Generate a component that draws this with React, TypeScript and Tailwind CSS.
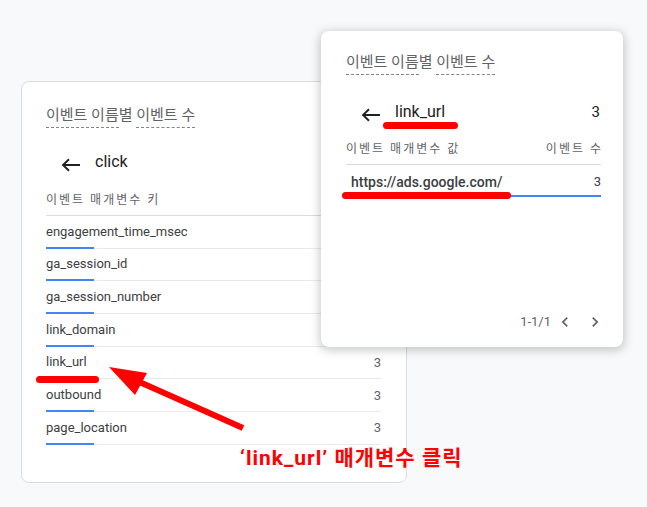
import React from 'react';

const rows = [
  'engagement_time_msec',
  'ga_session_id',
  'ga_session_number',
  'link_domain',
  'link_url',
  'outbound',
  'page_location',
];

const font = "font-['Roboto','Noto_Sans_CJK_KR',sans-serif]";

const Title: React.FC = () => (
  <div className="flex text-[15px] leading-[18px] text-[#5f6368] whitespace-pre">
    <span className="border-b border-dashed border-[#80868b] pb-[3px]">이벤트 이름</span>
    <span>별 </span>
    <span className="border-b border-dashed border-[#80868b] pb-[3px]">이벤트 수</span>
  </div>
);

const BackArrow: React.FC = () => (
  <svg width="20" height="14" viewBox="0 0 20 14" className="text-[#202124]">
    <path d="M19 7H2.5M8 1.2L2 7l6 5.8" fill="none" stroke="currentColor" strokeWidth="1.9" />
  </svg>
);

export default function App() {
  return (
    <div className={`relative w-[647px] h-[507px] bg-[#f8f9fa] overflow-hidden ${font}`}>
      {/* left card */}
      <div className="absolute left-[21px] top-[81px] w-[386px] h-[402px] bg-white border border-[#dadce0] rounded-[8px] pl-[24px] pr-[25px] pt-[24px]">
        <Title />
        <div className="flex items-center h-[24px] mt-[22px] pl-[15px]">
          <span className="mt-[6px]"><BackArrow /></span>
          <span className="ml-[14px] text-[16px] text-[#202124]">click</span>
        </div>
        <div className="mt-[17px] text-[12px] tracking-[2px] text-[#5f6368] h-[25px] border-b border-[#dadce0]">
          이벤트 매개변수 키
        </div>
        <div>
          {rows.map((r, i) => (
            <div key={r} className="relative h-[32.7px] border-b border-[#e8eaed] flex items-center justify-between text-[13px] text-[#3c4043]">
              <span className="-mt-[1px]">{r}</span>
              {i >= 4 && <span className="text-[#5f6368]">3</span>}
              {i !== 4 && <div className="absolute left-0 -bottom-[1px] w-[48px] h-[2px] bg-[#4285f4]" />}
            </div>
          ))}
        </div>
      </div>

      {/* popup card */}
      <div className="absolute left-[321px] top-[31px] w-[302px] h-[316px] bg-white rounded-[8px] shadow-[0_2px_8px_2px_rgba(60,64,67,0.25)] pl-[25px] pr-[22px] pt-[22px]">
        <Title />
        <div className="flex items-center h-[24px] mt-[25px] pl-[15px]">
          <span className="mt-[6px]"><BackArrow /></span>
          <span className="ml-[14px] text-[16px] text-[#202124] flex-1">link_url</span>
          <span className="text-[15px] text-[#202124] mr-[1px]">3</span>
        </div>
        <div className="mt-[16px] flex justify-between text-[12px] tracking-[2px] text-[#5f6368] h-[25px] border-b border-[#dadce0]">
          <span>이벤트 매개변수 값</span>
          <span className="-mr-[2px]">이벤트 수</span>
        </div>
        <div className="relative h-[32px] flex items-center justify-between text-[14px] font-medium text-[#3c4043] pl-[5px]">
          <span className="mt-[2px]">https://ads.google.com/</span>
          <span className="mt-[2px] text-[13px] font-normal">3</span>
          <div className="absolute left-0 right-0 bottom-[0px] h-[2px] bg-[#4285f4]" />
        </div>
        <div className="absolute right-[18px] bottom-[15px] flex items-center text-[13px] text-[#5f6368]">
          <span>1-1/1</span>
          <svg width="20" height="20" viewBox="0 0 24 24" className="ml-[4px]">
            <path d="M15.41 7.41L14 6l-6 6 6 6 1.41-1.41L10.83 12z" fill="#5f6368" />
          </svg>
          <svg width="20" height="20" viewBox="0 0 24 24" className="ml-[10px]">
            <path d="M10 6L8.59 7.41 13.17 12l-4.58 4.59L10 18l6-6z" fill="#5f6368" />
          </svg>
        </div>
      </div>

      {/* red annotations */}
      <div className="absolute left-[36px] top-[376px] w-[63px] h-[7px] rounded-full bg-[#ff0000]" />
      <div className="absolute left-[383px] top-[122px] w-[75px] h-[7px] rounded-full bg-[#ff0000]" />
      <div className="absolute left-[342px] top-[192px] w-[169px] h-[7px] rounded-full bg-[#ff0000]" />
      <svg className="absolute left-0 top-0" width="647" height="507">
        <line x1="243" y1="428" x2="135" y2="380" stroke="#ff0000" strokeWidth="6" />
        <polygon points="109,367 147,373 135,395" fill="#ff0000" />
      </svg>
      <div className="absolute left-[240px] top-[444px] text-[21px] leading-[28px] font-bold text-[#ff0000] tracking-[1px]">
        ‘link_url’ 매개변수 클릭
      </div>
    </div>
  );
}
